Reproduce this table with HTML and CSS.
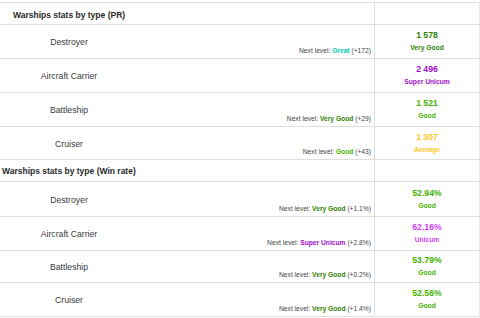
FILE: index.html
```html
<!DOCTYPE html>
<html>
<head>
<meta charset="utf-8">
<link rel="stylesheet" href="styles.css">
</head>
<body>
<div class="stats">
  <div class="row head">
    <div class="title pr">Warships stats by type (PR)</div>
    <div class="val"></div>
  </div>
  <div class="row">
    <div class="name">Destroyer</div>
    <div class="next"><span>Next level: <b class="great">Great</b> (+172)</span></div>
    <div class="val"><span class="num vgood">1 578</span><span class="rate vgood">Very Good</span></div>
  </div>
  <div class="row">
    <div class="name">Aircraft Carrier</div>
    <div class="next"></div>
    <div class="val"><span class="num sunicum">2 496</span><span class="rate sunicum">Super Unicum</span></div>
  </div>
  <div class="row">
    <div class="name">Battleship</div>
    <div class="next"><span>Next level: <b class="vgood">Very Good</b> (+29)</span></div>
    <div class="val"><span class="num good">1 521</span><span class="rate good">Good</span></div>
  </div>
  <div class="row short">
    <div class="name">Cruiser</div>
    <div class="next"><span>Next level: <b class="good">Good</b> (+43)</span></div>
    <div class="val"><span class="num avg">1 307</span><span class="rate avg">Average</span></div>
  </div>
  <div class="row head">
    <div class="title wr">Warships stats by type (Win rate)</div>
    <div class="val"></div>
  </div>
  <div class="row tall">
    <div class="name">Destroyer</div>
    <div class="next"><span>Next level: <b class="vgood">Very Good</b> (+1.1%)</span></div>
    <div class="val"><span class="num good">52.94%</span><span class="rate good">Good</span></div>
  </div>
  <div class="row">
    <div class="name">Aircraft Carrier</div>
    <div class="next"><span>Next level: <b class="sunicum">Super Unicum</b> (+2.8%)</span></div>
    <div class="val"><span class="num unicum">62.16%</span><span class="rate unicum">Unicum</span></div>
  </div>
  <div class="row shorter">
    <div class="name">Battleship</div>
    <div class="next"><span>Next level: <b class="vgood">Very Good</b> (+0.2%)</span></div>
    <div class="val"><span class="num good">53.79%</span><span class="rate good">Good</span></div>
  </div>
  <div class="row">
    <div class="name">Cruiser</div>
    <div class="next"><span>Next level: <b class="vgood">Very Good</b> (+1.4%)</span></div>
    <div class="val"><span class="num good">52.56%</span><span class="rate good">Good</span></div>
  </div>
</div>
</body>
</html>
```
FILE: styles.css
```css
* { box-sizing: border-box; }
html, body { margin: 0; padding: 0; background: #fff; }
body {
  padding-top: 2px;
  font-family: "Liberation Sans", Arial, sans-serif;
  color: #3a3a3a;
}
.stats {
  width: 480px;
  border-top: 1px solid #dedede;
}
.row {
  display: grid;
  grid-template-columns: 138px 237px 105px;
  height: 34px;
  border-bottom: 1px solid #dedede;
}
.row.short { height: 33px; }
.row.tall { height: 35px; }
.row.shorter { height: 32px; }
.row.head {
  height: 22px;
  grid-template-columns: 375px 105px;
}
.title {
  font-size: 8.5px;
  font-weight: bold;
  color: #2a2a2a;
  border-right: 1px solid #dedede;
  display: flex;
  align-items: center;
}
.title.pr { padding-left: 13px; padding-top: 3px; }
.title.wr { padding-left: 2px; }
.name {
  font-size: 8.7px;
  display: flex;
  align-items: center;
  justify-content: center;
  padding-top: 1px;
}
.next {
  font-size: 6.7px;
  line-height: 9px;
  color: #444;
  border-right: 1px solid #dedede;
  display: flex;
  align-items: flex-end;
  justify-content: flex-end;
  padding: 0 3px 3px 0;
  white-space: nowrap;
}
.val {
  border-right: 1px solid #e6e6e6;
  display: flex;
  flex-direction: column;
  align-items: center;
  justify-content: center;
  gap: 2px;
  padding-bottom: 1px;
}
.num {
  font-size: 8.7px;
  font-weight: bold;
  line-height: 12px;
}
.rate {
  font-size: 6.7px;
  font-weight: bold;
  line-height: 10px;
}
.great { color: #02c9b3; }
.vgood { color: #318000; }
.good { color: #44b300; }
.avg { color: #ffc71f; }
.unicum { color: #d042f3; }
.sunicum { color: #a00dc5; }
```
